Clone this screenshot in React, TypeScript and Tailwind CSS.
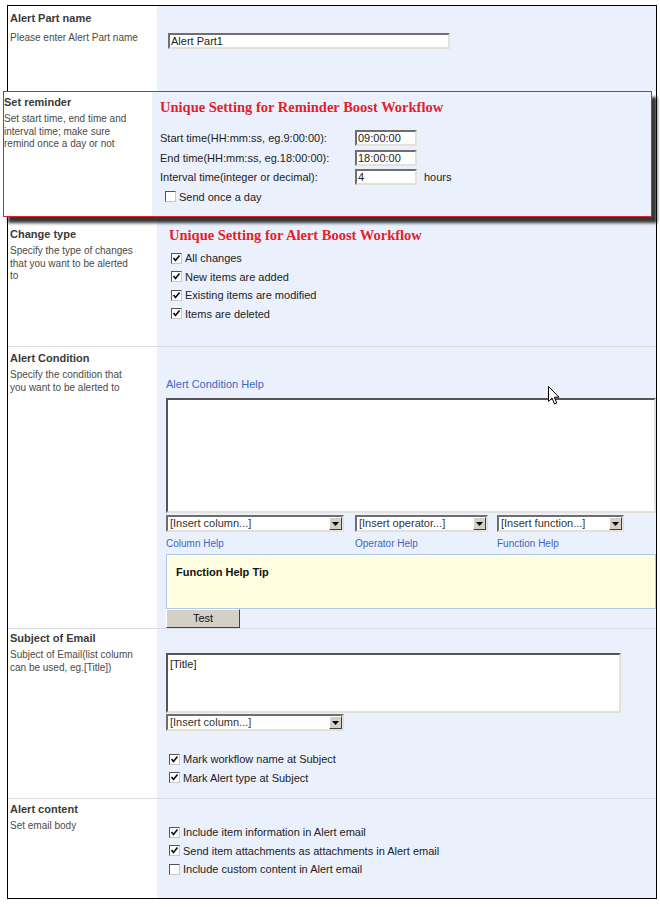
import React from 'react';

const sans = { fontFamily: '"Liberation Sans", Arial, sans-serif' };
const serif = { fontFamily: '"Liberation Serif", "Times New Roman", serif' };

function Check({ checked }: { checked?: boolean }) {
  return (
    <span className="inline-flex items-center justify-center w-[11px] h-[11px] bg-white border border-t-[#555] border-l-[#555] border-b-[#c8c8c8] border-r-[#c8c8c8] shrink-0">
      {checked && (
        <svg width="9" height="9" viewBox="0 0 9 9">
          <path d="M1.5 4 L3.5 6.5 L7.5 1.5" fill="none" stroke="#111" strokeWidth="1.7" />
        </svg>
      )}
    </span>
  );
}

function CheckRow({ label, checked }: { label: string; checked?: boolean }) {
  return (
    <div className="flex items-center h-[18.5px] gap-[3px] text-[11px] text-[#222]">
      <Check checked={checked} />
      <span>{label}</span>
    </div>
  );
}

function TextBox({ value, className }: { value: string; className: string }) {
  return (
    <div
      className={
        'bg-white border-2 border-t-[#6e6e6e] border-l-[#6e6e6e] border-b-[#e4e1da] border-r-[#e4e1da] flex items-center pl-[1px] text-[11px] text-[#222] ' +
        className
      }
    >
      {value}
    </div>
  );
}

function Select({ label, className }: { label: string; className: string }) {
  return (
    <div
      className={
        'bg-white border-2 border-t-[#6e6e6e] border-l-[#6e6e6e] border-b-[#e4e1da] border-r-[#e4e1da] flex items-center justify-between text-[11px] text-[#333] h-[17px] ' +
        className
      }
    >
      <span className="pl-[2px]">{label}</span>
      <span className="w-[13px] h-[13px] bg-[#d4d0c8] border border-t-[#fff] border-l-[#fff] border-b-[#404040] border-r-[#404040] flex items-center justify-center">
        <svg width="7" height="4" viewBox="0 0 7 4">
          <path d="M0 0 H7 L3.5 4 Z" fill="#000" />
        </svg>
      </span>
    </div>
  );
}

function LeftCell({ title, desc, pt, width = 'w-[149px]', pl = 'pl-[2px]' }: { title: string; desc: string[]; pt: string; width?: string; pl?: string }) {
  return (
    <div className={`${width} shrink-0 bg-white ${pt} ${pl}`}>
      <div className="text-[11px] leading-[14px] font-bold text-[#3a3a3a]">{title}</div>
      <div className="mt-[4px] text-[10px] leading-[12.5px] text-[#4a4a4a]">
        {desc.map((d) => (
          <div key={d}>{d}</div>
        ))}
      </div>
    </div>
  );
}

export default function App() {
  return (
    <div className="relative min-h-[909px] w-[660px] bg-white pt-[5px] pl-[7px]" style={sans}>
      <div className="w-[650px] border border-black">
        {/* Alert Part name */}
        <div className="flex h-[85px]">
          <div className="w-[149px] shrink-0 bg-white pt-[5px] pl-[2px]">
            <div className="text-[11px] leading-[14px] font-bold text-[#3a3a3a]">Alert Part name</div>
            <div className="mt-[7px] text-[10px] leading-[12.5px] text-[#4a4a4a]">Please enter Alert Part name</div>
          </div>
          <div className="flex-1 bg-[#ebf1fc] pt-[27px] pl-[11px]">
            <TextBox value="Alert Part1" className="w-[282px] h-[16px]" />
          </div>
        </div>

        {/* Set reminder popout */}
        <div className="flex h-[126px] w-[649px] -ml-[5px] border border-[#d9262e] shadow-[5px_6px_3px_rgba(20,20,20,0.85)] relative z-10">
          <LeftCell
            title="Set reminder"
            desc={['Set start time, end time and', 'interval time; make sure', 'remind once a day or not']}
            pt="pt-[3px]"
            width="w-[148px]"
            pl="pl-0"
          />
          <div className="flex-1 bg-[#ebf1fc] pt-[6px] pl-[8px]">
            <div className="text-[14.5px] leading-[18px] font-bold text-[#e3212b]" style={serif}>
              Unique Setting for Reminder Boost Workflow
            </div>
            <div className="mt-[14px] flex flex-col gap-[3px] text-[11px] text-[#222]">
              <div className="flex items-center">
                <span className="w-[195px]">Start time(HH:mm:ss, eg.9:00:00):</span>
                <TextBox value="09:00:00" className="w-[62px] h-[16px]" />
              </div>
              <div className="flex items-center">
                <span className="w-[195px]">End time(HH:mm:ss, eg.18:00:00):</span>
                <TextBox value="18:00:00" className="w-[62px] h-[16px]" />
              </div>
              <div className="flex items-center">
                <span className="w-[195px]">Interval time(integer or decimal):</span>
                <TextBox value="4" className="w-[62px] h-[16px]" />
                <span className="ml-[7px]">hours</span>
              </div>
            </div>
            <div className="mt-[2px] pl-[5px]">
              <CheckRow label="Send once a day" />
            </div>
          </div>
        </div>

        {/* Change type */}
        <div className="flex h-[130px] border-b border-[#d8dce3]">
          <LeftCell
            title="Change type"
            desc={['Specify the type of changes', 'that you want to be alerted', 'to']}
            pt="pt-[10px]"
          />
          <div className="flex-1 bg-[#ebf1fc] pt-[9px] pl-[12px]">
            <div className="text-[14.5px] leading-[18px] font-bold text-[#e3212b]" style={serif}>
              Unique Setting for Alert Boost Workflow
            </div>
            <div className="mt-[5px] pl-[2px]">
              <CheckRow label="All changes" checked />
              <CheckRow label="New items are added" checked />
              <CheckRow label="Existing items are modified" checked />
              <CheckRow label="Items are deleted" checked />
            </div>
          </div>
        </div>

        {/* Alert Condition */}
        <div className="flex h-[282px] border-b border-[#d8dce3]">
          <LeftCell
            title="Alert Condition"
            desc={['Specify the condition that', 'you want to be alerted to']}
            pt="pt-[4px]"
          />
          <div className="flex-1 bg-[#ebf1fc] pt-[30px] pl-[9px]">
            <div className="text-[11px] leading-[14px] text-[#3d66c2]">Alert Condition Help</div>
            <div className="mt-[7px] h-[115px] bg-white border-2 border-t-[#555] border-l-[#555] border-b-[#e4e1da] border-r-[#e4e1da]" />
            <div className="mt-[2px] flex">
              <Select label="[Insert column...]" className="w-[178px]" />
              <Select label="[Insert operator...]" className="w-[133px] ml-[11px]" />
              <Select label="[Insert function...]" className="w-[127px] ml-[9px]" />
            </div>
            <div className="mt-[5px] flex text-[10px] leading-[14px] text-[#3d66c2]">
              <span className="w-[189px]">Column Help</span>
              <span className="w-[142px]">Operator Help</span>
              <span>Function Help</span>
            </div>
            <div className="mt-[3px] h-[55px] bg-[#fffee1] border border-[#b0c8ec] pt-[9px] pl-[9px]">
              <div className="text-[11px] font-bold text-[#111]">Function Help Tip</div>
            </div>
            <button className="h-[19px] w-[74px] bg-[#d4d0c8] border border-t-[#fff] border-l-[#fff] border-b-[#404040] border-r-[#404040] text-[11px] text-[#111] flex items-center justify-center">
              Test
            </button>
          </div>
        </div>

        {/* Subject of Email */}
        <div className="flex h-[170px] border-b border-[#d8dce3]">
          <LeftCell
            title="Subject of Email"
            desc={['Subject of Email(list column', 'can be used, eg.[Title])']}
            pt="pt-[2px]"
          />
          <div className="flex-1 bg-[#ebf1fc] pt-[24px] pl-[9px]">
            <div className="h-[60px] w-[455px] bg-white border-2 border-t-[#555] border-l-[#555] border-b-[#e4e1da] border-r-[#e4e1da] pl-[2px] pt-[1px] text-[11px] text-[#222]">
              [Title]
            </div>
            <Select label="[Insert column...]" className="w-[178px] mt-[1px]" />
            <div className="mt-[19px] pl-[3px]">
              <CheckRow label="Mark workflow name at Subject" checked />
              <CheckRow label="Mark Alert type at Subject" checked />
            </div>
          </div>
        </div>

        {/* Alert content */}
        <div className="flex h-[99px]">
          <LeftCell title="Alert content" desc={['Set email body']} pt="pt-[3px]" />
          <div className="flex-1 bg-[#ebf1fc] pt-[24px] pl-[12px]">
            <CheckRow label="Include item information in Alert email" checked />
            <CheckRow label="Send item attachments as attachments in Alert email" checked />
            <CheckRow label="Include custom content in Alert email" />
          </div>
        </div>
      </div>

      {/* mouse pointer */}
      <svg className="absolute left-[548px] top-[386px]" width="12" height="19" viewBox="0 0 12 19">
        <path d="M0.5 0.5 V15.5 L4 12 L6.5 18 L8.8 17 L6.3 11.2 H11 Z" fill="#fff" stroke="#000" strokeWidth="1" />
      </svg>
    </div>
  );
}
